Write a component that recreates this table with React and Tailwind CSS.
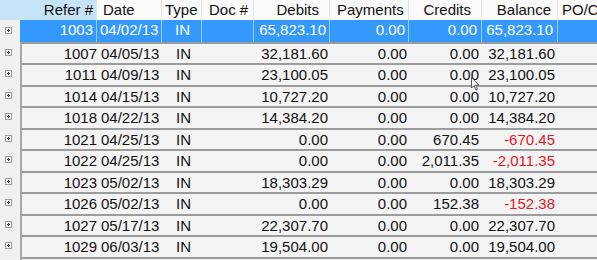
const rows = [
  { ref: "1003", date: "04/02/13", debits: "65,823.10", payments: "0.00", credits: "0.00", balance: "65,823.10" },
  { ref: "1007", date: "04/05/13", debits: "32,181.60", payments: "0.00", credits: "0.00", balance: "32,181.60" },
  { ref: "1011", date: "04/09/13", debits: "23,100.05", payments: "0.00", credits: "0.00", balance: "23,100.05" },
  { ref: "1014", date: "04/15/13", debits: "10,727.20", payments: "0.00", credits: "0.00", balance: "10,727.20" },
  { ref: "1018", date: "04/22/13", debits: "14,384.20", payments: "0.00", credits: "0.00", balance: "14,384.20" },
  { ref: "1021", date: "04/25/13", debits: "0.00", payments: "0.00", credits: "670.45", balance: "-670.45" },
  { ref: "1022", date: "04/25/13", debits: "0.00", payments: "0.00", credits: "2,011.35", balance: "-2,011.35" },
  { ref: "1023", date: "05/02/13", debits: "18,303.29", payments: "0.00", credits: "0.00", balance: "18,303.29" },
  { ref: "1026", date: "05/02/13", debits: "0.00", payments: "0.00", credits: "152.38", balance: "-152.38" },
  { ref: "1027", date: "05/17/13", debits: "22,307.70", payments: "0.00", credits: "0.00", balance: "22,307.70" },
  { ref: "1029", date: "06/03/13", debits: "19,504.00", payments: "0.00", credits: "0.00", balance: "19,504.00" },
  { ref: "", date: "", debits: "", payments: "", credits: "", balance: "" },
];

const cols = "grid grid-cols-[76px_65px_40px_52px_76px_79px_73px_76px_60px]";

function Expander() {
  return (
    <div className="relative h-[7px] w-[7px] border border-[#9c9c9c] bg-[#f8f8f8]">
      <div className="absolute left-[1px] top-[2px] h-[1px] w-[3px] bg-[#333]" />
      <div className="absolute left-[2px] top-[1px] h-[3px] w-[1px] bg-[#333]" />
    </div>
  );
}

export default function App() {
  return (
    <div
      className="relative h-[260px] w-[597px] overflow-hidden bg-[#f0f0f0] text-[15px] text-[#111]"
      style={{ fontFamily: '"Liberation Sans", Arial, sans-serif' }}
    >
      {/* header */}
      <div className="flex h-[20px] leading-[20px]">
        <div className="w-[20px] shrink-0 bg-[#c6e3f7]" />
        <div className={`${cols} flex-1`}>
          <div className="bg-[#c6e3f7] pr-[3px] text-right">Refer #</div>
          <div className="border-l border-[#e4e4e4] bg-[#fafafa] pl-[6px]">Date</div>
          <div className="border-l border-[#e4e4e4] bg-[#fafafa] pl-[3px]">Type</div>
          <div className="border-l border-[#e4e4e4] bg-[#fafafa] pl-[7px]">Doc #</div>
          <div className="border-l border-[#e4e4e4] bg-[#fafafa] pr-[10px] text-right">Debits</div>
          <div className="border-l border-[#e4e4e4] bg-[#fafafa] pl-[7px]">Payments</div>
          <div className="border-l border-[#e4e4e4] bg-[#fafafa] pr-[10px] text-right">Credits</div>
          <div className="border-l border-[#e4e4e4] bg-[#fafafa] pr-[6px] text-right">Balance</div>
          <div className="border-l border-[#e4e4e4] bg-[#fafafa] pl-[4px]">PO/C</div>
        </div>
      </div>

      {/* rows */}
      {rows.map((r, i) => {
        const sel = i === 0;
        const neg = r.balance.startsWith("-");
        return (
          <div key={i} className="flex h-[21.5px]">
            <div className="flex w-[20px] shrink-0 items-center justify-center pr-[3px]">
              <Expander />
            </div>
            <div
              className={`${cols} flex-1 leading-[19px] ${
                sel
                  ? "bg-[#3399ff] text-white"
                  : "border-l-2 border-t-2 border-l-[#a8a8a8] border-t-[#9c9c9c] bg-[#f4f4f4]"
              }`}
            >
              <div className={`text-right ${sel ? "pr-[3px]" : "pr-[1px]"}`}>{r.ref}</div>
              <div className={`pl-[3px] ${sel ? "border-l border-[#9ccbff]" : ""}`}>{r.date}</div>
              <div className={`pl-[13px] ${sel ? "border-l border-[#9ccbff]" : ""}`}>{r.ref ? "IN" : ""}</div>
              <div className={sel ? "border-l border-[#9ccbff]" : ""} />
              <div className={`pr-[3px] text-right ${sel ? "border-l border-[#9ccbff]" : ""}`}>{r.debits}</div>
              <div className={`pr-[3px] text-right ${sel ? "border-l border-[#9ccbff]" : ""}`}>{r.payments}</div>
              <div className={`pr-[4px] text-right ${sel ? "border-l border-[#9ccbff]" : ""}`}>{r.credits}</div>
              <div
                className={`pr-[4px] text-right ${sel ? "border-l border-[#9ccbff]" : ""} ${
                  neg ? "text-[#e8141c]" : ""
                }`}
              >
                {r.balance}
              </div>
              <div className={sel ? "border-l border-[#9ccbff]" : ""} />
            </div>
          </div>
        );
      })}

      {/* mouse pointer */}
      <svg className="absolute left-[471px] top-[77px]" width="9" height="14" viewBox="0 0 9 14">
        <path d="M0.5 0.5 L0.5 11 L3 8.5 L5 13 L6.5 12.3 L4.6 8 L8 8 Z" fill="#fff" stroke="#555" strokeWidth="1" />
      </svg>
    </div>
  );
}
